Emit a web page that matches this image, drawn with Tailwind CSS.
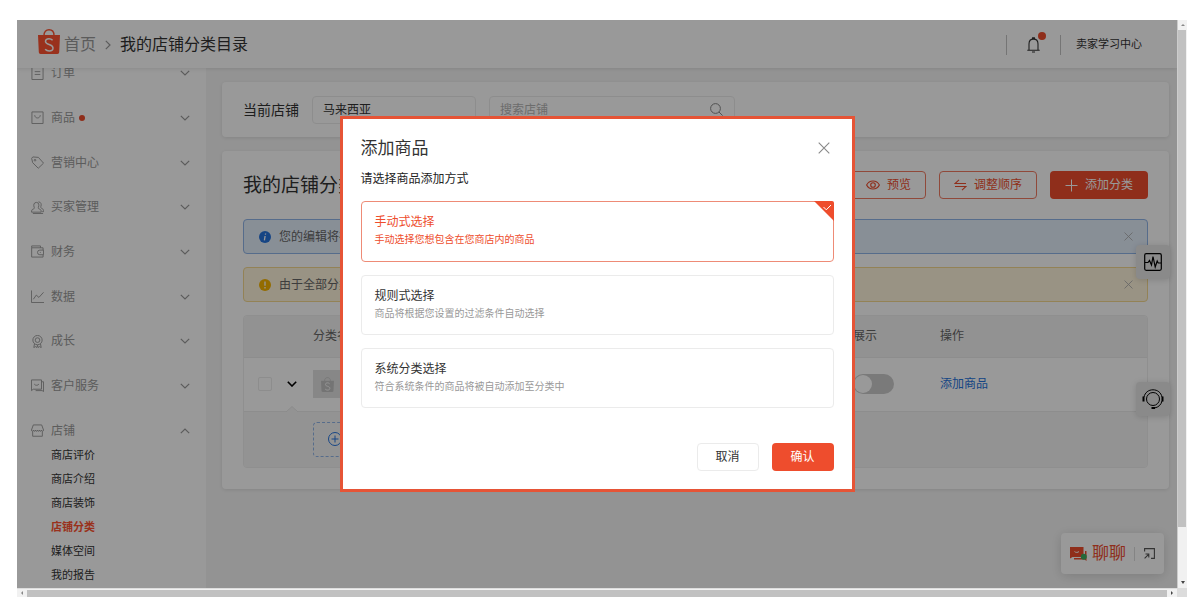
<!DOCTYPE html>
<html lang="zh-CN">
<head>
<meta charset="utf-8">
<meta name="viewport" content="width=device-width, initial-scale=1">
<title>我的店铺分类目录</title>
<script src="https://cdn.jsdelivr.net/npm/@tailwindcss/browser@4"></script>
</head>
<body class="bg-white font-['Liberation_Sans','Noto_Sans_CJK_SC',sans-serif] text-xs text-[#333]">
<svg class="hidden" aria-hidden="true">
  <symbol id="down" viewBox="0 0 10 6"><path d="M.8.8 5 5 9.2.8" fill="none" stroke="currentColor" stroke-width="1.2"/></symbol>
  <symbol id="up" viewBox="0 0 10 6"><path d="M.8 5.2 5 1 9.2 5.2" fill="none" stroke="currentColor" stroke-width="1.2"/></symbol>
  <symbol id="close" viewBox="0 0 12 12"><path d="M.7.7 11.3 11.3M11.3.7.7 11.3" fill="none" stroke="currentColor" stroke-width="1.1"/></symbol>
  <symbol id="bag" viewBox="0 0 22 25"><path d="M0 6h22l-.8 17.2a1.8 1.8 0 0 1-1.8 1.8H2.6a1.8 1.8 0 0 1-1.8-1.8Z" fill="currentColor"/><path d="M6 6.5C6 3 8 .8 11 .8S16 3 16 6.500" fill="none" stroke="currentColor" stroke-width="1.4"/><path d="M14.600 11.300C13.600 10.200 12.400 9.700 11 9.700c-2 0-3.500 1.100-3.500 2.800 0 1.800 1.500 2.300 3.600 3 2.300.8 3.900 1.500 3.900 3.500 0 1.900-1.700 3-3.800 3-1.700 0-3-.6-4.100-1.700" fill="none" stroke="#fff" stroke-width="1.500"/></symbol>
</svg>
<div class="h-screen pt-5 pb-[15px] pl-[17px] pr-[13px]">
<div class="grid h-full grid-cols-[1fr_10px] grid-rows-[1fr_9px]">

  <!-- Page viewport -->
  <div class="relative flex min-w-0 flex-col overflow-hidden bg-[#f6f6f6]">
    <header class="relative z-10 flex h-12 shrink-0 items-center border-t border-white bg-white pl-[21px] pr-[35px] shadow-[0_1px_4px_rgba(0,0,0,.1)]">
      <svg class="-mt-1.5 h-[25px] w-[22px] shrink-0 text-[#ff5331]"><use href="#bag"/></svg>
      <nav class="ml-1 flex items-center pt-px text-base">
        <a href="#" class="text-[#999]">首页</a>
        <svg class="mx-[9px] h-2.5 w-1.5" viewBox="0 0 6 10" fill="none" stroke="#999" stroke-width="1.2"><path d="M.8.8 5 5 .8 9.200"/></svg>
        <span class="text-[#333]">我的店铺分类目录</span>
      </nav>
      <div class="ml-auto flex items-center">
        <span class="h-5 w-px bg-[#c4c4c4]"></span>
        <button class="relative mx-5 h-4 w-[13px]" aria-label="通知">
          <svg class="h-4 w-[13px]" viewBox="0 0 13 16" fill="none" stroke="#333" stroke-width="1.100"><path d="M.3 13.200h12.400M2 13V7c0-3 1.900-4.900 4.500-4.900S11 4 11 7v6M5.600 2V.9h1.800V2M5 15h3"/></svg>
          <span class="absolute -right-1.5 -top-[5px] size-2 rounded-full bg-[#ee4d2d]"></span>
        </button>
        <span class="h-5 w-px bg-[#c4c4c4]"></span>
        <a href="#" class="ml-[15px] text-[11px]">卖家学习中心</a>
      </div>
    </header>

    <div class="flex min-h-0 flex-1">
      <aside class="w-[189px] shrink-0 overflow-hidden bg-white text-[#999]">
        <ul class="-mt-[17px] grid h-[402px] auto-rows-fr pl-[14px] pr-4">
          <li class="flex items-center gap-[7px]"><svg class="size-[13px]" viewBox="0 0 14 14" fill="none" stroke="currentColor"><path d="M1 .5h12v13H1ZM4 5h6M4 8h6"/></svg>订单<svg class="ml-auto h-1.5 w-2.5"><use href="#down"/></svg></li>
          <li class="flex items-center gap-[7px]"><svg class="size-[13px]" viewBox="0 0 14 14" fill="none" stroke="currentColor"><path d="M1 1h12v12.500H1ZM4 4.500c.3 4 5.700 4 6 0"/></svg><span class="flex items-center gap-1">商品<i class="size-1.5 rounded-full bg-[#ee4d2d]"></i></span><svg class="ml-auto h-1.5 w-2.5"><use href="#down"/></svg></li>
          <li class="flex items-center gap-[7px]"><svg class="size-[13px]" viewBox="0 0 14 14" fill="none" stroke="currentColor"><path d="M.7 2.500 2 1l6 .5 5.500 6.200-5.700 5.500-6-6Z"/><circle cx="4.300" cy="4.500" r=".9"/></svg>营销中心<svg class="ml-auto h-1.5 w-2.5"><use href="#down"/></svg></li>
          <li class="flex items-center gap-[7px]"><svg class="size-[13px]" viewBox="0 0 14 14" fill="none" stroke="currentColor"><path d="M3.500 7C2.400 4.500 3 1.500 5.800 1.500S9 4.500 7.900 7c-.3.900.2 1.300 1.300 1.700 1.400.5 1.800 1.200 1.800 3.300H.6c0-2.100.4-2.800 1.700-3.300C3.500 8.300 3.800 7.900 3.500 7ZM8 1c2.500-.3 3.700 2.500 2.600 5-.4 1 0 1.500 1.200 2 1.300.5 1.700 1.700 1.700 3.500H12M2 13.500h11"/></svg>买家管理<svg class="ml-auto h-1.5 w-2.5"><use href="#down"/></svg></li>
          <li class="flex items-center gap-[7px]"><svg class="size-[13px]" viewBox="0 0 14 14" fill="none" stroke="currentColor"><path d="M13 5.500V3H.7v10H13v-2.500M.7 3V1h9.500v2M13.500 5.500h-4a2.500 2.500 0 0 0 0 5h4ZM9.500 8h1"/></svg>财务<svg class="ml-auto h-1.5 w-2.5"><use href="#down"/></svg></li>
          <li class="flex items-center gap-[7px]"><svg class="size-[13px]" viewBox="0 0 14 14" fill="none" stroke="currentColor"><path d="M.5.5v13H14M2.500 10l3.200-4.500L8.500 8l5-5.500"/></svg>数据<svg class="ml-auto h-1.5 w-2.5"><use href="#down"/></svg></li>
          <li class="flex items-center gap-[7px]"><svg class="size-[13px]" viewBox="0 0 14 14" fill="none" stroke="currentColor"><circle cx="7" cy="5.500" r="5"/><circle cx="7" cy="5.500" r="2.500"/><path d="M3.800 9.500 3 13.500l2-1 1.300 1L7 11l.7 2.500 1.300-1 2 1-.8-4"/></svg>成长<svg class="ml-auto h-1.5 w-2.5"><use href="#down"/></svg></li>
          <li class="flex items-center gap-[7px]"><svg class="size-[13px]" viewBox="0 0 14 14" fill="none" stroke="currentColor"><path d="M.5 1h10.800v10H2.500l-2 1.500ZM3.500 5.500c1 1.700 4 1.700 5 0M11.500 3h2v10.500L12 12.500H5"/></svg>客户服务<svg class="ml-auto h-1.5 w-2.5"><use href="#down"/></svg></li>
          <li class="flex items-center gap-[7px]"><svg class="size-[13px]" viewBox="0 0 14 14" fill="none" stroke="currentColor"><path d="M2.500 1h9l2 5.500c0 1.800-2.200 1.800-2.300 0 0 1.800-2 1.800-2.100 0 0 1.800-2.100 1.800-2.100 0 0 1.800-2.100 1.800-2.100 0 0 1.800-2.100 1.800-2.100 0 0 1.800-2.300 1.800-2.300 0ZM1.800 8v5.200h10.400V8"/></svg>店铺<svg class="ml-auto h-1.5 w-2.5"><use href="#up"/></svg></li>
        </ul>
        <ul class="-mt-[10px] pl-[34px] text-[11px] leading-6 text-[#333]">
          <li><a href="#">商店评价</a></li>
          <li><a href="#">商店介绍</a></li>
          <li><a href="#">商店装饰</a></li>
          <li><a href="#" class="font-bold text-[#ff5331]">店铺分类</a></li>
          <li><a href="#">媒体空间</a></li>
          <li><a href="#">我的报告</a></li>
        </ul>
      </aside>

      <main class="flex min-w-0 flex-1 flex-col gap-[14px] pl-4 pr-2 pt-[14px]">
        <section class="flex h-[55px] shrink-0 items-center rounded-sm bg-white px-[21px] shadow-[0_1px_4px_rgba(0,0,0,.1)]">
          <label for="shop" class="text-sm">当前店铺</label>
          <select id="shop" class="ml-[13px] h-7 w-[164px] appearance-none rounded-sm border border-[#ececec] bg-white px-2.5"><option>马来西亚</option></select>
          <div class="ml-[13px] flex h-7 w-[246px] items-center rounded-sm border border-[#ececec] pl-2.5 pr-[11px]">
            <input type="text" aria-label="搜索店铺" placeholder="搜索店铺" class="min-w-0 flex-1 bg-transparent outline-none placeholder:text-[#b5b5b5]">
            <svg class="size-[13px]" viewBox="0 0 13 13" fill="none" stroke="#888"><circle cx="5.500" cy="5.500" r="4.900"/><path d="m9 9 3.600 3.600"/></svg>
          </div>
        </section>

        <section class="rounded-sm bg-white px-[21px] pb-[21px] pt-5 shadow-[0_1px_4px_rgba(0,0,0,.1)]">
          <div class="flex h-7 items-center gap-[13px]">
            <h1 class="mr-auto pt-0.5 text-[19px]">我的店铺分类</h1>
            <button class="flex h-7 items-center gap-[7px] rounded-sm border border-[#f07a62] px-[14px] text-[#ee4d2d]"><svg class="h-2.5 w-[14px]" viewBox="0 0 14 10" fill="none" stroke="currentColor" stroke-width="1.100"><path d="M.6 5C2 2.300 4.200 1 7 1s5 1.300 6.400 4C12 7.700 9.800 9 7 9S2 7.700.6 5Z"/><circle cx="7" cy="5" r="2.300"/></svg>预览</button>
            <button class="flex h-7 items-center gap-[7px] rounded-sm border border-[#f07a62] px-[14px] text-[#ee4d2d]"><svg class="h-3 w-[13px]" viewBox="0 0 13 12" fill="none" stroke="currentColor" stroke-width="1.100"><path d="M5 .8 1 4.500h11M8 11.200l4-3.700H1"/></svg>调整顺序</button>
            <button class="flex h-7 items-center gap-[7px] rounded-sm bg-[#ee4d2d] px-[15px] text-white"><svg class="size-[13px]" viewBox="0 0 13 13" stroke="currentColor"><path d="M6.500.5v12M.5 6.500h12"/></svg>添加分类</button>
          </div>
          <div class="mt-5 flex h-[35px] items-center gap-2 rounded-sm border border-[#8fb4e8] bg-[#e3eefb] pl-[15px] pr-[14px] text-[#666]">
            <svg class="size-3" viewBox="0 0 12 12"><circle cx="6" cy="6" r="6" fill="#2673dd"/><path d="M6.600 2.500 6.400 3.700M6.100 5 5.400 9.300" stroke="#fff" stroke-width="1.300"/></svg>
            <p class="mr-auto">您的编辑将在</p>
            <button aria-label="关闭提示"><svg class="size-[9px] text-[#aaa]"><use href="#close"/></svg></button>
          </div>
          <div class="mt-[13px] flex h-[35px] items-center gap-2 rounded-sm border border-[#f5d98f] bg-[#fff5dc] pl-[15px] pr-[14px] text-[#666]">
            <svg class="size-3" viewBox="0 0 12 12"><circle cx="6" cy="6" r="6" fill="#f5b400"/><path d="M6 2.500v4.300M6 8v1.400" stroke="#fff" stroke-width="1.300"/></svg>
            <p class="mr-auto">由于全部分类</p>
            <button aria-label="关闭警告"><svg class="size-[9px] text-[#aaa]"><use href="#close"/></svg></button>
          </div>
          <div class="mt-[13px] overflow-hidden rounded-sm border border-[#eee]">
          <table class="w-full table-fixed border-collapse text-left">
            <colgroup><col class="w-[69px]"><col><col class="w-[87px]"><col class="w-[207px]"></colgroup>
            <thead class="bg-[#f4f4f4] text-[#666]">
              <tr class="h-[41px] border-b border-[#ebebeb]"><th></th><th class="font-normal">分类名称</th><th class="pr-[63px] font-normal"><span class="float-right whitespace-nowrap">展示</span></th><th class="font-normal">操作</th></tr>
            </thead>
            <tbody>
              <tr class="h-[54px] border-b border-[#ebebeb]">
                <td><div class="relative flex h-[53px] items-center pl-[14px]"><input type="checkbox" aria-label="选择分类" class="size-[14px] appearance-none rounded-xs border border-[#ebebeb]"><button class="ml-[15px]" aria-label="收起"><svg class="h-1.5 w-2.5 text-black" viewBox="0 0 10 6"><path d="M.8.8 5 5 9.200.8" fill="none" stroke="currentColor" stroke-width="1.600"/></svg></button>
                  <svg class="absolute bottom-[-1px] left-[42px] h-1.5 w-3" viewBox="0 0 12 6"><path d="M0 6 6 .5 12 6" fill="#f6f6f6" stroke="#e8e8e8"/></svg></div></td>
                <td><div class="flex size-7 items-center justify-center bg-[#e2e2e2]"><svg class="h-[15px] w-[13px] text-[#c2c2c2]" viewBox="0 0 22 25"><use href="#bag"/></svg></div></td>
                <td><label class="flex h-5 w-[41px] rounded-full bg-[#ccc] p-px"><input type="checkbox" role="switch" aria-label="展示" class="size-[18px] appearance-none rounded-full bg-white"></label></td>
                <td><a href="#" class="text-[#2673dd]">添加商品</a></td>
              </tr>
              <tr class="h-14 bg-[#f6f6f6]"><td></td><td colspan="3"><button aria-label="添加商品" class="flex h-[35px] w-[105px] items-center rounded-sm border border-dashed border-[#8fb4e8] pl-[14px]"><svg class="size-[14px]" viewBox="0 0 14 14" fill="none" stroke="#2673dd"><circle cx="7" cy="7" r="6.500"/><path d="M7 3.500v7M3.500 7h7"/></svg></button></td></tr>
            </tbody>
          </table>
          </div>
        </section>
      </main>
    </div>

    <!-- Floating tools -->
    <button aria-label="诊断" class="absolute right-[7px] top-[225px] flex size-[34px] items-center justify-center rounded-sm bg-[#e6e6e6] text-black shadow-[0_1px_6px_rgba(0,0,0,.15)]"><svg class="size-[18px]" viewBox="0 0 18 18" fill="none" stroke="currentColor" stroke-width="1.200"><rect x=".7" y=".7" width="16.600" height="16.600" rx="1.500"/><path d="M1 9.500h3l1.500-2 2 4.500L9 3.500l2.200 10.500 2-6 1 2H17"/></svg></button>
    <button aria-label="客服" class="absolute right-[7px] top-[362px] flex size-[34px] items-center justify-center rounded-sm bg-[#e6e6e6] text-black shadow-[0_1px_6px_rgba(0,0,0,.15)]"><svg class="h-5 w-[22px]" viewBox="0 0 22 20" fill="none" stroke="currentColor"><circle cx="11" cy="10" r="6.500"/><path d="M2 8C3 3.500 6.500.8 11 .8S19 3.500 20 8M20 12c-1 4-3.500 6.200-7.500 7"/><path d="M1.500 7.500v5M20.500 7.500v5M9.500 19h3.500" stroke-width="2"/></svg></button>
    <div class="absolute bottom-[14px] right-[13px] flex h-[41px] w-[103px] items-center rounded-sm bg-white pl-[9px] shadow-[0_2px_12px_rgba(0,0,0,.15)]">
      <button class="flex items-center gap-[5px] text-[17px] text-[#ee4d2d]"><svg class="h-[15px] w-[17px]" viewBox="0 0 17 15"><path d="M0 1h13.500v10H2.500L0 12.500ZM15 5h1.500v10L14.500 13.500H4V12h11Z" fill="#ee4d2d"/><path d="M4.500 5.500c1 1.200 3.500 1.200 4.500 0" stroke="#fff" fill="none"/><circle cx="13.800" cy="10.800" r="3" fill="#3fae5f"/></svg><span class="pt-0.5">聊聊</span></button>
      <span class="ml-2 h-[14px] w-px bg-[#ddd]"></span>
      <button aria-label="展开聊天" class="ml-[9px]"><svg class="size-[11px]" viewBox="0 0 11 11" fill="none" stroke="#555" stroke-width="1.100"><path d="M.6 3.500V.6h9.800v9.800H7M.6 10.400l4-4M1.500 6h3.300v3.500"/></svg></button>
    </div>

    <!-- Modal -->
    <div class="absolute inset-0 z-20 flex items-center justify-center bg-black/40">
      <form role="dialog" aria-labelledby="dialog-title" class="w-[515px] border-3 border-[#e65436] bg-white px-[18px] pb-[18px] pt-4">
        <div class="flex h-[26px] items-center justify-between pr-1">
          <h2 id="dialog-title" class="pt-0.5 text-[17px]">添加商品</h2>
          <button type="button" aria-label="关闭"><svg class="size-3 text-[#888]"><use href="#close"/></svg></button>
        </div>
        <p class="mt-2 leading-5 text-[#222]">请选择商品添加方式</p>
        <div class="mt-3 flex flex-col gap-[13px]">
          <label class="relative flex h-[61px] flex-col rounded-sm border border-[#ee8b76] px-[13px] pt-2.5 text-[#ee4d2d]"><input type="radio" name="mode" checked class="sr-only"><span class="leading-5">手动式选择</span><span class="text-[10px] leading-4">手动选择您想包含在您商店内的商品</span>
            <svg class="absolute -right-px -top-px size-5" viewBox="0 0 20 20"><path d="M0 0h18a2 2 0 0 1 2 2v18Z" fill="#ee4d2d"/><path d="m9.500 6 2.800 2.800L17 4" fill="none" stroke="#fff"/></svg></label>
          <label class="flex h-[60px] flex-col rounded-sm border border-[#ebebeb] px-[13px] pt-2.5"><input type="radio" name="mode" class="sr-only"><span class="leading-5">规则式选择</span><span class="text-[10px] leading-4 text-[#999]">商品将根据您设置的过滤条件自动选择</span></label>
          <label class="flex h-[60px] flex-col rounded-sm border border-[#ebebeb] px-[13px] pt-2.5"><input type="radio" name="mode" class="sr-only"><span class="leading-5">系统分类选择</span><span class="text-[10px] leading-4 text-[#999]">符合系统条件的商品将被自动添加至分类中</span></label>
        </div>
        <div class="mt-[35px] flex justify-end gap-[13px]">
          <button type="button" class="h-7 w-[62px] rounded-sm border border-[#ebebeb]">取消</button>
          <button type="submit" class="h-7 w-[62px] rounded-sm bg-[#ee4d2d] text-white">确认</button>
        </div>
      </form>
    </div>
  </div>

  <!-- Vertical scrollbar -->
  <div class="flex flex-col items-center border-l border-[#ccc] bg-[#f1f1f1]">
    <svg class="h-2.5 w-1 shrink-0" viewBox="0 0 4 10"><path d="M0 6h4L2 4Z" fill="#888"/></svg>
    <div class="mr-px w-2 grow-[497] bg-[#c1c1c1]"></div>
    <div class="grow-[51]"></div>
    <svg class="h-2.5 w-1 shrink-0" viewBox="0 0 4 10"><path d="M0 3h4L2 6Z" fill="#444"/></svg>
  </div>
  <!-- Horizontal scrollbar -->
  <div class="flex items-center border-t border-[#ddd] bg-[#f1f1f1]">
    <svg class="h-1 w-2.5 shrink-0" viewBox="0 0 10 4"><path d="M6 0v4L4 2Z" fill="#888"/></svg>
    <div class="h-[7px] flex-1 bg-[#c1c1c1]"></div>
    <svg class="h-1 w-2.5 shrink-0" viewBox="0 0 10 4"><path d="M4 0v4L6 2Z" fill="#444"/></svg>
  </div>
  <div class="bg-[#dcdcdc]"></div>
</div>
</div>
</body>
</html>
